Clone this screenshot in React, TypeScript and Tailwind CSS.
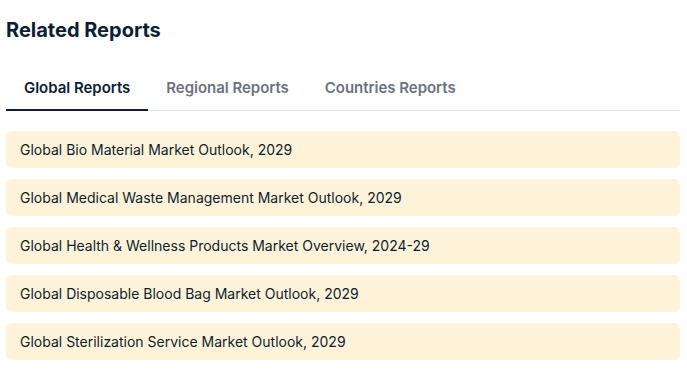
import React from "react";

const reports = [
  "Global Bio Material Market Outlook, 2029",
  "Global Medical Waste Management Market Outlook, 2029",
  "Global Health & Wellness Products Market Overview, 2024-29",
  "Global Disposable Blood Bag Market Outlook, 2029",
  "Global Sterilization Service Market Outlook, 2029",
];

export default function App() {
  return (
    <div className="w-[687px] h-[378px] bg-white" style={{ fontFamily: "Inter, 'Noto Sans', sans-serif" }}>
      <div className="ml-[6px] w-[674px] pt-[16px]">
        <h2 className="text-[20px] leading-[28px] font-bold text-[#0b1e33]">Related Reports</h2>
        <div className="mt-[19px] flex border-b border-[#e5e7eb]">
          <button className="px-[18px] pt-[4px] h-[48px] text-[15px] tracking-[-0.03px] font-semibold text-[#0b1e33] border-b-[2px] border-[#0b1e33] -mb-px">
            Global Reports
          </button>
          <button className="px-[18px] pt-[4px] h-[48px] text-[15px] tracking-[-0.03px] font-semibold text-[#6b7280] border-b-[2px] border-transparent -mb-px">
            Regional Reports
          </button>
          <button className="px-[18px] pt-[4px] h-[48px] text-[15px] tracking-[-0.03px] font-semibold text-[#6b7280] border-b-[2px] border-transparent -mb-px">
            Countries Reports
          </button>
        </div>
        <div className="mt-[20px] flex flex-col gap-[11px]">
          {reports.map((r) => (
            <div key={r} className="h-[37px] rounded-[6px] bg-[#fef3d8] px-[14px] flex items-center text-[14px] text-[#0b1e33]">
              {r}
            </div>
          ))}
        </div>
      </div>
    </div>
  );
}
